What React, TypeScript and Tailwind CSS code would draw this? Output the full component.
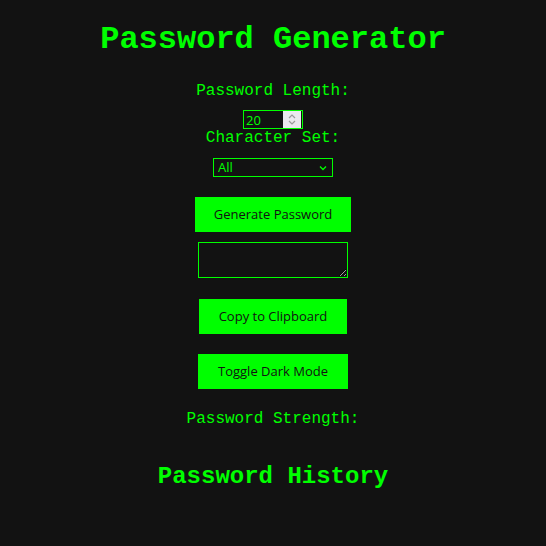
import React, { useState } from "react";

const mono = "font-['Liberation_Mono','Courier_New',monospace]";
const sans = "font-['Open_Sans','Noto_Sans',sans-serif]";

export default function App() {
  const [length, setLength] = useState(20);
  const [charset, setCharset] = useState("all");

  return (
    <div className={`min-h-[546px] w-full bg-[#121212] text-[#00ff00] ${mono} flex flex-col items-center`}>
      <h1 className="mt-[22px] text-[32px] leading-[36px] font-bold">Password Generator</h1>

      {/* Options */}
      <label className="mt-[24px] text-[16px] leading-[18px]">Password Length:</label>
      <div className="relative mt-[10px] w-[60px] h-[19px]">
        <input
          type="number"
          value={length}
          onChange={(e) => setLength(Number(e.target.value))}
          className={`block w-[60px] h-[19px] border border-[#00ff00] bg-[#121212] pl-[2px] text-[13px] leading-[17px] text-[#00ff00] ${sans} [appearance:textfield] [&::-webkit-inner-spin-button]:appearance-none`}
        />
        <span className="absolute right-[2px] top-[1px] w-[18px] h-[17px] bg-[#e9e9ed] flex flex-col items-center justify-center gap-[1px] pointer-events-none">
          <svg width="8" height="5" viewBox="0 0 8 5">
            <path d="M1 4 L4 1 L7 4" fill="none" stroke="#9a9a9a" strokeWidth="1.2" />
          </svg>
          <svg width="8" height="5" viewBox="0 0 8 5">
            <path d="M1 1 L4 4 L7 1" fill="none" stroke="#9a9a9a" strokeWidth="1.2" />
          </svg>
        </span>
      </div>
      <label className="text-[16px] leading-[18px]">Character Set:</label>
      <div className="relative mt-[11px] w-[120px] h-[19px]">
        <select
          value={charset}
          onChange={(e) => setCharset(e.target.value)}
          className={`block appearance-none w-[120px] h-[19px] border border-[#00ff00] bg-[#121212] pl-[4px] text-[13px] leading-[17px] text-[#00ff00] ${sans}`}
        >
          <option value="all">All</option>
          <option value="letters">Letters</option>
          <option value="numbers">Numbers</option>
        </select>
        <svg className="absolute right-[6px] top-[7px] pointer-events-none" width="8" height="6" viewBox="0 0 8 6">
          <path d="M1 1.5 L4 4.5 L7 1.5" fill="none" stroke="#00ff00" strokeWidth="1.3" />
        </svg>
      </div>

      {/* Actions */}
      <button className={`mt-[20px] w-[156px] h-[35px] bg-[#00ff00] text-[#121212] text-[13px] ${sans}`}>
        Generate Password
      </button>
      <textarea
        readOnly
        className="mt-[10px] w-[150px] h-[36px] border border-[#00ff00] bg-[#121212] text-[#00ff00] block"
      />
      <button className={`mt-[21px] w-[148px] h-[35px] bg-[#00ff00] text-[#121212] text-[13px] ${sans}`}>
        Copy to Clipboard
      </button>
      <button className={`mt-[20px] w-[150px] h-[35px] bg-[#00ff00] text-[#121212] text-[13px] ${sans}`}>
        Toggle Dark Mode
      </button>

      <p className="mt-[21px] text-[16px] leading-[18px]">Password Strength:</p>
      <h2 className="mt-[35px] text-[24px] leading-[28px] font-bold">Password History</h2>
    </div>
  );
}
